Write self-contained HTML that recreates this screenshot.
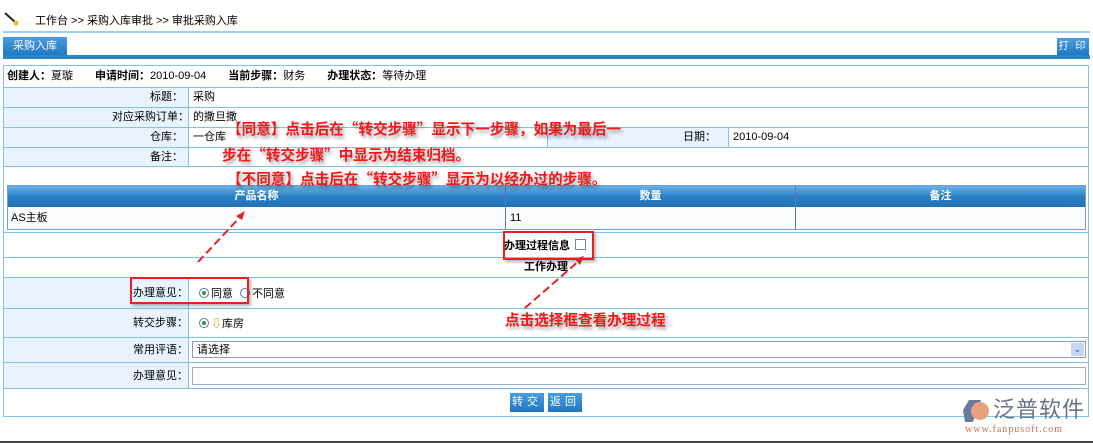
<!DOCTYPE html>
<html><head><meta charset="utf-8"><style>
*{margin:0;padding:0;box-sizing:border-box}
body{width:1093px;height:443px;background:#fff;position:relative;overflow:hidden;font-family:"Liberation Sans","Noto Sans CJK SC","WenQuanYi Zen Hei",sans-serif;font-size:11px;color:#000}
.a{position:absolute}
.hl{position:absolute;height:1px;background:#7ec4e8}
.vl{position:absolute;width:1px;background:#7ec4e8}
.lab{position:absolute;background:#e8f3fd;text-align:right;padding-right:6px}
.t{position:absolute;white-space:nowrap;line-height:12px}
.red{position:absolute;white-space:nowrap;color:#f01818;font-weight:bold;font-size:14.6px;line-height:16px;text-shadow:2px 3px 3px rgba(0,0,0,.35);font-family:"Noto Sans CJK SC","WenQuanYi Zen Hei",sans-serif}
.btn{position:absolute;background:linear-gradient(#4a9ee0,#1f76c0);color:#fff;text-align:center;line-height:18px;letter-spacing:4px;font-size:11px;white-space:nowrap}
.rad{position:absolute;width:10px;height:10px;border:1px solid #5a7d9a;border-radius:50%;background:#fff}
.rad.on::after{content:"";position:absolute;left:2px;top:2px;width:4px;height:4px;border-radius:50%;background:#2a9a3a}
</style></head><body>
<svg class="a" style="left:4px;top:12px" width="16" height="14"><line x1="1" y1="1" x2="11" y2="10" stroke="#222" stroke-width="2"/><circle cx="12" cy="11" r="2.5" fill="#e8c020"/></svg>
<div class="t" style="left:35px;top:15px">工作台 &gt;&gt; 采购入库审批 &gt;&gt; 审批采购入库</div>
<div class="a" style="left:3px;top:31px;width:1087px;height:2px;background:#9fd0ef"></div>
<div class="btn" style="left:3px;top:37px;width:64px;height:19px;letter-spacing:0">采购入库</div>
<div class="btn" style="left:1057px;top:38px;width:32px;height:18px;letter-spacing:2px;font-size:10px">打 印</div>
<div class="a" style="left:3px;top:55px;width:1087px;height:4px;background:#2a86c8"></div>
<div class="a" style="left:3px;top:65px;width:1086px;height:352px;border:1px solid #7ec4e8"></div>
<div class="t" style="left:7px;top:70px"><b>创建人：</b>夏璇　　<b>申请时间：</b>2010-09-04　　<b>当前步骤：</b>财务　　<b>办理状态：</b>等待办理</div>
<div class="lab" style="left:4px;top:87px;width:184px;height:79px"></div>
<div class="lab" style="left:547px;top:127px;width:181px;height:20px"></div>
<div class="hl" style="left:4px;top:87px;width:1085px"></div>
<div class="hl" style="left:4px;top:107px;width:1085px"></div>
<div class="hl" style="left:4px;top:127px;width:1085px"></div>
<div class="hl" style="left:4px;top:147px;width:1085px"></div>
<div class="hl" style="left:4px;top:166px;width:1085px"></div>
<div class="vl" style="left:188px;top:87px;height:79px"></div>
<div class="vl" style="left:547px;top:127px;height:20px"></div>
<div class="vl" style="left:728px;top:127px;height:20px"></div>
<div class="t" style="left:150px;top:91px">标题：</div><div class="t" style="left:193px;top:91px">采购</div>
<div class="t" style="left:112px;top:111px">对应采购订单：</div><div class="t" style="left:193px;top:111px">的撒旦撒</div>
<div class="t" style="left:150px;top:131px">仓库：</div><div class="t" style="left:193px;top:131px">一仓库</div>
<div class="t" style="left:683px;top:131px">日期：</div><div class="t" style="left:733px;top:131px">2010-09-04</div>
<div class="t" style="left:150px;top:151px">备注：</div>
<div class="a" style="left:7px;top:185px;width:1079px;height:45px;border:1px solid #7a9cc8"></div>
<div class="a" style="left:8px;top:186px;width:1077px;height:21px;background:linear-gradient(#6ab2e6,#2a80c4 50%,#2070b8)"></div>
<div class="a" style="left:8px;top:208px;width:1077px;height:21px;background:#fafcfe"></div>
<div class="a" style="left:505px;top:186px;width:1px;height:43px;background:#5a7aa8"></div>
<div class="a" style="left:795px;top:186px;width:1px;height:43px;background:#5a7aa8"></div>
<div class="t" style="left:8px;top:190px;width:497px;text-align:center;color:#fff;font-weight:bold">产品名称</div>
<div class="t" style="left:506px;top:190px;width:289px;text-align:center;color:#fff;font-weight:bold">数量</div>
<div class="t" style="left:796px;top:190px;width:289px;text-align:center;color:#fff;font-weight:bold">备注</div>
<div class="t" style="left:11px;top:212px">AS主板</div><div class="t" style="left:510px;top:212px">11</div>
<div class="hl" style="left:4px;top:232px;width:1085px"></div>
<div class="hl" style="left:4px;top:257px;width:1085px"></div>
<div class="hl" style="left:4px;top:277px;width:1085px"></div>
<div class="t" style="left:504px;top:240px;font-weight:bold">办理过程信息</div>
<div class="a" style="left:575px;top:239px;width:11px;height:11px;border:1px solid #6a8aaa;background:#fff"></div>
<div class="t" style="left:524px;top:261px;font-weight:bold">工作办理</div>
<div class="lab" style="left:4px;top:278px;width:184px;height:110px"></div>
<div class="vl" style="left:188px;top:278px;height:110px"></div>
<div class="hl" style="left:4px;top:308px;width:1085px"></div>
<div class="hl" style="left:4px;top:337px;width:1085px"></div>
<div class="hl" style="left:4px;top:362px;width:1085px"></div>
<div class="hl" style="left:4px;top:388px;width:1085px"></div>
<div class="t" style="left:133px;top:287px">办理意见：</div>
<div class="rad on" style="left:199px;top:288px"></div><div class="t" style="left:211px;top:288px">同意</div>
<div class="rad" style="left:240px;top:288px"></div><div class="t" style="left:252px;top:288px">不同意</div>
<div class="t" style="left:133px;top:317px">转交步骤：</div>
<div class="rad on" style="left:199px;top:318px"></div><div class="t" style="left:211px;top:318px"><span style="color:#c8a800;font-weight:bold">⇩</span>库房</div>
<div class="t" style="left:133px;top:344px">常用评语：</div>
<div class="a" style="left:192px;top:341px;width:894px;height:17px;border:1px solid #8aa0b8;background:#fff"></div>
<div class="t" style="left:197px;top:344px">请选择</div>
<div class="a" style="left:1071px;top:343px;width:13px;height:13px;background:#c4d8f4;color:#2a4a80;font-size:9px;text-align:center;line-height:13px">⌄</div>
<div class="t" style="left:133px;top:370px">办理意见：</div>
<div class="a" style="left:192px;top:367px;width:894px;height:18px;border:1px solid #9ab0c4;background:#fff"></div>
<div class="btn" style="left:510px;top:393px;width:34px;height:19px">转交</div>
<div class="btn" style="left:548px;top:393px;width:34px;height:19px">返回</div>
<div class="a" style="left:0;top:441px;width:1093px;height:2px;background:#444"></div>
<svg class="a" style="left:963px;top:398px" width="30" height="26"><path d="M6 2 L18 2 L10 24 L2 24 L0 12Z" fill="#6a7a9a"/><circle cx="17" cy="13" r="9" fill="#e8a080"/></svg>
<div class="t" style="left:993px;top:397px;font-size:22px;line-height:26px;color:#6a7488;letter-spacing:1px">泛普软件</div>
<div class="t" style="left:965px;top:424px;font-size:10px;color:#d07050;font-family:'Liberation Serif',serif;letter-spacing:1px">www.fanpusoft.com</div>
<div class="red" style="left:227px;top:121px">【同意】点击后在“转交步骤”显示下一步骤，如果为最后一</div>
<div class="red" style="left:222px;top:147px">步在“转交步骤”中显示为结束归档。</div>
<div class="red" style="left:227px;top:171px">【不同意】点击后在“转交步骤”显示为以经办过的步骤。</div>
<div class="a" style="left:130px;top:277px;width:119px;height:27px;border:2px solid #e82020;box-shadow:2px 2px 3px rgba(0,0,0,.3)"></div>
<div class="a" style="left:503px;top:231px;width:91px;height:29px;border:2px solid #e82020;box-shadow:2px 2px 3px rgba(0,0,0,.3)"></div>
<div class="red" style="left:505px;top:312px">点击选择框查看办理过程</div>
<svg class="a" style="left:0;top:0" width="1093" height="443"><g stroke="#e82020" stroke-width="2" stroke-dasharray="8,4" fill="none"><line x1="198" y1="262" x2="242" y2="215"/><line x1="525" y1="308" x2="580" y2="260"/></g><polygon points="245,211 236,216 242,220" fill="#e82020"/><polygon points="584,256 575,259 580,265" fill="#e82020"/></svg>
</body></html>
